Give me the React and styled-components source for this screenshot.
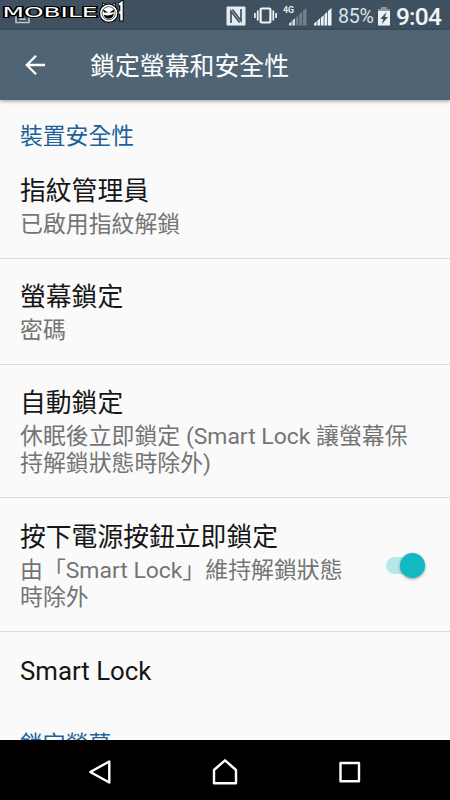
import React from "react";
import styled, { createGlobalStyle } from "styled-components";

const GlobalStyle = createGlobalStyle`
  html, body {
    margin: 0;
    padding: 0;
    background: #fafafa;
  }
  * {
    box-sizing: border-box;
  }
`;

const Screen = styled.div`
  position: relative;
  width: 450px;
  height: 800px;
  display: flex;
  flex-direction: column;
  overflow: hidden;
  background: #fafafa;
  font-family: Roboto, "Noto Sans CJK TC", sans-serif;
`;

const StatusBar = styled.header`
  flex: none;
  height: 30px;
  display: flex;
  align-items: center;
  justify-content: flex-end;
  padding: 2px 10px 0 0;
  background: #3f5161;
  color: #f1f5f7;
`;

const StatusIcon = styled.svg`
  flex: none;
  display: block;
  margin-right: ${(props) => props.$gap || 0}px;
`;

const PictureIcon = styled.svg`
  margin: 0 auto 0 15px;
`;

const Battery = styled.span`
  width: 36px;
  margin-right: 4px;
  padding-top: 1px;
  font-size: 19.6px;
  line-height: 28px;
  letter-spacing: -0.3px;
  color: #dce4e8;
  white-space: nowrap;
`;

const Clock = styled.span`
  width: 44px;
  padding-top: 2px;
  font-size: 24.5px;
  font-weight: 500;
  line-height: 28px;
  letter-spacing: -0.8px;
  white-space: nowrap;
`;

/* Watermark that lies over the status bar */
const Watermark = styled.svg`
  position: absolute;
  left: 0;
  top: 0;
`;

const Toolbar = styled.div`
  flex: none;
  z-index: 1;
  height: 70px;
  display: flex;
  align-items: center;
  padding-left: 24px;
  background: #4f6575;
  box-shadow: 0 1px 4px rgba(0, 0, 0, 0.4);
`;

const ToolbarTitle = styled.h1`
  margin: 0 0 0 44px;
  padding-top: 3px;
  font-size: 24.9px;
  font-weight: 400;
  line-height: 36px;
  color: #fff;
`;

const Content = styled.main`
  flex: 1;
  min-height: 0;
  overflow: hidden;
`;

const SectionTitle = styled.h2`
  height: 52px;
  margin: 0;
  padding: 20px 20px 0;
  font-size: 22.8px;
  font-weight: 400;
  line-height: 34px;
  color: #1f6299;
`;

const Row = styled.div`
  display: flex;
  align-items: center;
  height: ${(props) => props.$height}px;
  padding: 2px 20px 0;
  border-bottom: ${(props) => (props.$last ? "none" : "1.5px solid #dcdcdc")};
`;

const RowText = styled.div`
  flex: none;
  width: ${(props) => (props.$narrow ? "340px" : "410px")};
`;

const Title = styled.div`
  font-size: 25.8px;
  line-height: 34px;
  color: #161616;
`;

const SummaryBlock = styled.div`
  margin-top: 4px;
`;

const Summary = styled.div`
  font-size: 22.9px;
  line-height: 26.6px;
  color: #747474;
  white-space: nowrap;
`;

const Track = styled.div`
  flex: none;
  display: flex;
  justify-content: flex-end;
  align-items: center;
  width: 39px;
  height: 17px;
  margin-left: 26px;
  border-radius: 9px;
  background: #b5e8e9;
`;

const Thumb = styled.div`
  flex: none;
  width: 25px;
  height: 25px;
  border-radius: 50%;
  background: #12b9c1;
  box-shadow: 0 1px 3px rgba(0, 0, 0, 0.4);
`;

const NavBar = styled.nav`
  flex: none;
  height: 60px;
  display: flex;
  align-items: center;
  justify-content: center;
  gap: 93px;
  padding-top: 4px;
  background: #000;
`;

const NavIcon = styled.svg`
  display: block;
  fill: none;
  stroke: #fff;
  stroke-width: 2.4;
  stroke-linejoin: round;
`;

const rows = [
  { title: "指紋管理員", summary: ["已啟用指紋解鎖"], height: 107 },
  { title: "螢幕鎖定", summary: ["密碼"], height: 106 },
  {
    title: "自動鎖定",
    summary: ["休眠後立即鎖定 (Smart Lock 讓螢幕保", "持解鎖狀態時除外)"],
    height: 133,
  },
  {
    title: "按下電源按鈕立即鎖定",
    summary: ["由「Smart Lock」維持解鎖狀態", "時除外"],
    height: 134,
    toggle: true,
  },
  { title: "Smart Lock", summary: [], height: 76, last: true },
];

const Logo = () => (
  <Watermark width="130" height="28" viewBox="0 0 130 28">
    <text
      x="2.5"
      y="17.3"
      textLength="95"
      lengthAdjust="spacingAndGlyphs"
      fontFamily="DejaVu Sans"
      fontSize="13.2"
      fill="#fff"
      stroke="#000"
      strokeWidth="2.2"
      paintOrder="stroke"
    >
      MOBILE
    </text>
    {/* horned face */}
    <path d="M102.5 7.5 102.5 2.8 106.5 5H111.5L115.5 2.8 115 7.5" fill="#fff" stroke="#000" strokeWidth="1" />
    <circle cx="108.7" cy="13.2" r="9.2" fill="#fff" stroke="#000" strokeWidth="1.2" />
    <circle cx="108.7" cy="13.2" r="6.6" fill="none" stroke="#333" strokeWidth=".8" />
    <path d="M102.8 9.2 108.2 12.6 104 12.6ZM114.6 9.2 109.3 12.6 113.6 12.6Z" fill="#000" />
    <path d="M103.5 14.8Q109 16.6 114 13.6Q113 18.8 108.8 18.8Q105 18.6 103.5 14.8Z" fill="#000" />
    {/* hooked numeral bar */}
    <path d="M119.2 4.5 121.5 3V21.6M119.2 12.5h2" fill="none" stroke="#000" strokeWidth="4.4" />
    <path d="M119.2 4.5 121.5 3V20.6M119.2 12.5h2" fill="none" stroke="#fff" strokeWidth="2.4" />
  </Watermark>
);

const StatusIcons = () => (
  <>
    {/* NFC */}
    <StatusIcon $gap={8} width="20" height="20" viewBox="0 0 20 20">
      <path d="M1.5 .5h17q1 0 1 1v17q0 1-1 1h-17q-1 0-1-1v-17q0-1 1-1z" fill="#e5ecef" />
      <path d="M5 17V5.2L13.6 16.6M15 3v11.8L6.4 3.4" fill="none" stroke="#3f5161" strokeWidth="1.7" />
    </StatusIcon>
    {/* vibrate */}
    <StatusIcon $gap={6} width="23" height="20" viewBox="0 0 23 20">
      <rect x="6.6" y="2.5" width="9.8" height="14" rx="1" fill="none" stroke="#eef3f5" strokeWidth="2.2" />
      <path d="M3.7 4.5v10M.9 7v5M19.3 4.5v10M22.1 7v5" stroke="#eef3f5" strokeWidth="1.7" />
    </StatusIcon>
    <StatusIcon $gap={7} width="24" height="22" viewBox="0 0 24 22">
      <text x="0" y="8" fontFamily="Roboto" fontSize="8.8" fontWeight="700" fill="#e5ecef">
        4G
      </text>
      <path d="M6 20.5v-2l2.6-2.2v4.2zM9.4 20.5v-5l2.6-2.3v7.3z" fill="#d5dde2" />
      <path d="M12.8 20.5v-8l2.6-2.3v10.3zM16.3 20.5V9.3L19 7v13.5zM19.9 20.5V6L23.4 3v17.5z" fill="#73818b" />
    </StatusIcon>
    <StatusIcon $gap={6} width="18" height="22" viewBox="0 0 18 22">
      <path
        d="M0 20.5v-2l2.7-2.2v4.2zM3.5 20.5v-5l2.7-2.3v7.3zM7 20.5v-8l2.7-2.3v10.3zM10.5 20.5V9.3L13.2 7v13.5zM14 20.5V6L17.5 3v17.5z"
        fill="#eef3f5"
      />
    </StatusIcon>
    <Battery>85%</Battery>
    <StatusIcon $gap={6} width="12" height="19" viewBox="0 0 12 19">
      <path d="M3 0h6v2h3v4H0V2h3z" fill="#8a979f" />
      <path d="M0 4h12v14.5H0z" fill="#edf2f4" />
      <path d="M8.5 5 2.3 12h3L3.7 17.2 10 10H7z" fill="#3f5161" />
    </StatusIcon>
    <Clock>9:04</Clock>
  </>
);

const SettingRow = ({ item }) => (
  <Row $height={item.height} $last={item.last}>
    <RowText $narrow={item.toggle}>
      <Title>{item.title}</Title>
      {item.summary.length > 0 && (
        <SummaryBlock>
          {item.summary.map((line) => (
            <Summary key={line}>{line}</Summary>
          ))}
        </SummaryBlock>
      )}
    </RowText>
    {item.toggle && (
      <Track>
        <Thumb />
      </Track>
    )}
  </Row>
);

const App = () => {
  return (
    <>
      <GlobalStyle />
      <Screen>
        <StatusBar>
          <PictureIcon width="15" height="16" viewBox="0 0 15 16">
            <path d="M1 3v11.5h13V3" fill="none" stroke="#b9c4cb" strokeWidth="1.6" />
            <path d="M3.5 12h8L9 9.5 7.5 11 6 9.5z" fill="#b9c4cb" />
          </PictureIcon>
          <StatusIcons />
        </StatusBar>
        <Logo />
        <Toolbar>
          <svg width="22" height="22" viewBox="0 0 22 22" fill="none" stroke="#fff" strokeWidth="2.3">
            <path d="M21 11H3M12 1.8 2.8 11l9.2 9.2" />
          </svg>
          <ToolbarTitle>鎖定螢幕和安全性</ToolbarTitle>
        </Toolbar>
        <Content>
          <SectionTitle>裝置安全性</SectionTitle>
          {rows.map((item) => (
            <SettingRow key={item.title} item={item} />
          ))}
          <SectionTitle>鎖定螢幕</SectionTitle>
        </Content>
        <NavBar>
          <NavIcon width="32" height="28" viewBox="0 0 32 28">
            <path d="M25.3 3.5v21L6.3 14z" />
          </NavIcon>
          <NavIcon width="32" height="28" viewBox="0 0 32 28">
            <path d="M5 25.3V12L16 2.3 27 12v13.3z" />
          </NavIcon>
          <NavIcon width="32" height="28" viewBox="0 0 32 28">
            <path d="M6.5 5h18.5v18.2H6.5z" />
          </NavIcon>
        </NavBar>
      </Screen>
    </>
  );
};

export default App;
